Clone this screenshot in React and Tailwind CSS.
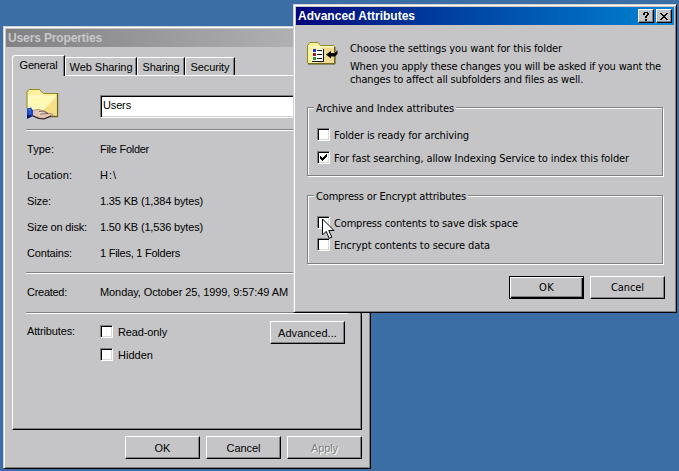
import { useLayoutEffect, useRef, useState } from "react";

const SANS = "font-['Liberation_Sans',Arial,sans-serif] text-[11px] leading-[14px]";
const TAHOMA = "font-['DejaVu_Sans_Condensed','DejaVu_Sans',Tahoma,sans-serif] text-[11px] leading-[13px]";
const TAHOMA_OPTION = "font-['DejaVu_Sans_Condensed','DejaVu_Sans',Tahoma,sans-serif] text-[11px] leading-[13px] pt-px";

// A single line of text whose tracking is adjusted to fill a given width.
function Line({ w, children, className = SANS }) {
  const ref = useRef(null);
  const [spacing, setSpacing] = useState(0);
  useLayoutEffect(() => {
    const natural = ref.current.getBoundingClientRect().width;
    setSpacing((w - natural) / children.length);
  }, [w, children]);
  return (
    <span ref={ref} className={`inline-block shrink-0 whitespace-nowrap ${className}`} style={{ letterSpacing: spacing }}>
      {children}
    </span>
  );
}

const RAISED =
  "border border-t-white border-l-white border-r-black border-b-black shadow-[inset_-1px_-1px_0_#808080]";

function Button({ w, children, font = SANS, primary = false, disabled = false }) {
  return (
    <button
      className={`flex h-[23px] w-[75px] shrink-0 items-center justify-center bg-[#c5c5c7] ${
        primary
          ? "border border-black shadow-[inset_1px_1px_0_#fff,inset_-1px_-1px_0_#000,inset_-2px_-2px_0_#808080]"
          : RAISED
      } ${disabled ? "text-[#808080] [text-shadow:1px_1px_0_#fff]" : ""}`}
    >
      <Line w={w} className={font}>{children}</Line>
    </button>
  );
}

function Checkbox({ checked = false }) {
  return (
    <span className="flex h-[13px] w-[13px] shrink-0 border border-t-[#808080] border-l-[#808080] border-r-white border-b-white bg-white shadow-[inset_1px_1px_0_#000,inset_-1px_-1px_0_#d8d8d8]">
      {checked && (
        <svg width="11" height="11" viewBox="0 0 11 11" shapeRendering="crispEdges">
          <path d="M2 4h1v3h-1zM3 5h1v3h-1zM4 6h1v3h-1zM5 5h1v3h-1zM6 4h1v3h-1zM7 3h1v3h-1zM8 2h1v3h-1z" />
        </svg>
      )}
    </span>
  );
}

function Option({ w, checked, children, font, gap = "gap-[5px]" }) {
  return (
    <label className={`flex h-[13px] items-start ${gap}`}>
      <Checkbox checked={checked} />
      <Line w={w} className={font}>{children}</Line>
    </label>
  );
}

function Divider() {
  return <div className="h-[2px] shrink-0 border-t border-b border-t-[#808080] border-b-white" />;
}

function Tab({ w, width, children }) {
  return (
    <div
      className={`flex h-[18px] ${width} justify-center rounded-tl-[2px] border-t border-l border-r border-t-white border-l-white border-r-black pt-[2px] shadow-[inset_-1px_0_0_#808080]`}
    >
      <Line w={w}>{children}</Line>
    </div>
  );
}

function SharedFolderIcon() {
  return (
    <svg width="33" height="33" viewBox="0 0 33 33" className="shrink-0">
      <path d="M1 30V4l2-2.5h10.500l3 3.500H31v24H1z" fill="#fff0a0" />
      <path d="M2 8h28L16 28H2z" fill="#fff9b8" />
      <path d="M30 9v19H12z" fill="#f7df86" />
      <path d="M1 21V4l2-2.500h10.500l3 3.500" fill="none" stroke="#8c8c20" />
      <path d="M17 5.500h14" fill="none" stroke="#8c8c20" />
      <path d="M2.500 21V8h13l3-2" fill="none" stroke="#fffde0" />
      <path d="M31.500 5v23.500H22" fill="none" stroke="#6a6420" strokeWidth="1.300" />
      <path d="M6 22.500l6-1 7 1.500 2 2 5 1c2 .5 1 2-1 2l-6 2.500-7-.5-6-3z" fill="#e6c3b2" stroke="#8e7068" strokeWidth=".7" />
      <path d="M7 28l6 2.500 5 .5 7-3" fill="none" stroke="#201814" strokeWidth="1.200" />
      <path d="M13 23.500l6 .5 3 1.500-8 .5" fill="#fff2e9" stroke="#4c3830" strokeWidth=".7" />
      <path d="M1 20.500l4-1 2 3v6l-6 2z" fill="#1746bd" />
      <path d="M1 27h3l2 1-5 3z" fill="#06186c" />
      <path d="M2 22l2-.5v5" fill="none" stroke="#4f7de5" />
    </svg>
  );
}

function SettingsFolderIcon() {
  return (
    <svg width="33" height="24" viewBox="0 0 33 24" className="shrink-0">
      <path d="M.5 21V3.500l2.500-3h8l2.500 3H26.500l1 1V21.500H1z" fill="#fbf29c" stroke="#8c8a28" />
      <path d="M14 5h13v16H10z" fill="#f3d891" />
      <path d="M1.500 5h24" stroke="#fffdd8" />
      <path d="M1 22h27V5" fill="none" stroke="#55501c" />
      <path d="M5 7h11v12H5z" fill="#fff" />
      <path d="M5 19.500h11.500V7" fill="none" stroke="#111" />
      <g shapeRendering="crispEdges">
        <path d="M6 7h3v3H6z" fill="#2929d0" />
        <path d="M6 11h3v3H6z" fill="#a31818" />
        <path d="M6 15h3v3H6z" fill="#20a020" />
        <path d="M10 8h5v1h-5zM10 12h5v1h-5zM10 16h5v1h-5z" fill="#111" />
      </g>
      <path d="M19 12.500l5-3.500v2h4l2.500-3v4l-2.500 2.500h-4V16.500z" fill="#080808" />
    </svg>
  );
}

function CaptionButton({ children }) {
  return (
    <button className={`flex h-[14px] w-[16px] items-center justify-center bg-[#c5c5c7] ${RAISED}`}>
      {children}
    </button>
  );
}

function Group({ title, w, children, pad }) {
  return (
    <div role="group" className="h-[70px] w-[357px] shrink-0 pr-px pb-px">
      <div className="flex h-[69px] w-[356px] flex-col border border-[#808080] shadow-[1px_1px_0_#fff,inset_1px_1px_0_#fff]">
        <div className="-mt-[6px] ml-[6px] flex h-[13px] shrink-0 self-start bg-[#c5c5c7] px-[2px]">
          <Line w={w} className={TAHOMA}>{title}</Line>
        </div>
        <div className={`flex flex-col pl-[9px] ${pad}`}>{children}</div>
      </div>
    </div>
  );
}

const WINDOW =
  "flex flex-col border-t border-l border-r border-b border-t-[#d0d0d2] border-l-[#d0d0d2] border-r-black border-b-black bg-[#c5c5c7] p-[2px] shadow-[inset_1px_1px_0_#fff,inset_-1px_-1px_0_#808080]";
const CAPTION = "font-['Liberation_Sans',Arial,sans-serif] text-[12px] leading-[18px] font-bold";

const details = [
  ["Type:", 27, "File Folder", 49],
  ["Location:", 45, "H:\\", 17],
  ["Size:", 24, "1.35 KB (1,384 bytes)", 103],
  ["Size on disk:", 60, "1.50 KB (1,536 bytes)", 103],
  ["Contains:", 45, "1 Files, 1 Folders", 80],
];

function PropertiesWindow() {
  return (
    <section className={`absolute top-[26px] left-[3px] h-[443px] w-[368px] ${WINDOW}`}>
      <header className="flex h-[18px] shrink-0 bg-linear-to-r from-[#818183] to-[#bdbdbf] pl-[2px] text-[#c8c8ca]">
        <Line w={94} className={CAPTION}>Users Properties</Line>
      </header>
      <div className="flex flex-col pt-[8px] pr-[6px] pl-[6px]">
        <nav className="flex h-[20px] items-end">
          <div className="z-10 -mb-px flex h-[21px] w-[53px] justify-center rounded-tl-[3px] border-t border-l border-r border-t-white border-l-white border-r-black bg-[#c5c5c7] pt-[2px] shadow-[inset_-1px_0_0_#808080]">
            <Line w={38}>General</Line>
          </div>
          <Tab w={63} width="w-[72px]">Web Sharing</Tab>
          <Tab w={37} width="w-[48px]">Sharing</Tab>
          <Tab w={39} width="w-[50px]">Security</Tab>
        </nav>
        <div className={`flex h-[355px] w-[350px] flex-col pt-[12px] pr-[13px] pl-[13px] ${RAISED}`}>
          <div className="flex h-[41px] shrink-0">
            <SharedFolderIcon />
            <div className="mt-[7px] ml-[41px] flex h-[23px] flex-1 items-start border border-t-[#808080] border-l-[#808080] border-r-white border-b-white bg-white pt-[2px] pl-[2px] shadow-[inset_1px_1px_0_#000,inset_-1px_-1px_0_#d0d0d0]">
              <Line w={28}>Users</Line>
            </div>
          </div>
          <Divider />
          <dl className="pt-[5px] pb-[6px]">
            {details.map(([name, nw, value, vw]) => (
              <div key={name} className="flex h-[26px] items-center">
                <dt className="flex w-[74px] pl-px"><Line w={nw}>{name}</Line></dt>
                <dd className="flex"><Line w={vw}>{value}</Line></dd>
              </div>
            ))}
          </dl>
          <Divider />
          <div className="flex h-[38px] shrink-0 pt-[11px]">
            <div className="flex w-[74px] pl-px"><Line w={40}>Created:</Line></div>
            <Line w={188}>Monday, October 25, 1999, 9:57:49 AM</Line>
          </div>
          <Divider />
          <div className="flex items-start pt-[7px]">
            <div className="flex w-[74px] pt-[3px] pl-px"><Line w={48}>Attributes:</Line></div>
            <div className="flex flex-col gap-[10px] pt-[4px]">
              <Option w={49} font={SANS}>Read-only</Option>
              <Option w={35} font={SANS}>Hidden</Option>
            </div>
            <div className="mr-[3px] ml-auto"><Button w={59}>Advanced...</Button></div>
          </div>
        </div>
        <footer className="flex justify-end gap-[6px] pt-[6px]">
          <Button w={16}>OK</Button>
          <Button w={34}>Cancel</Button>
          <Button w={27} disabled>Apply</Button>
        </footer>
      </div>
    </section>
  );
}

function AttributesDialog() {
  return (
    <section className={`absolute top-[4px] left-[293px] h-[309px] w-[384px] ${WINDOW}`}>
      <header className="flex h-[18px] shrink-0 items-center bg-linear-to-r from-[#00007b] to-[#1084d4] pr-[2px] pl-[2px] text-white">
        <Line w={117} className={CAPTION}>Advanced Attributes</Line>
        <div className="ml-auto flex gap-[2px] text-black">
          <CaptionButton>
            <svg width="8" height="9" viewBox="0 0 8 9" shapeRendering="crispEdges">
              <path d="M2 0h4v1h-4zM1 1h2v2h-2zM5 1h2v2h-2zM4 3h2v1h-2zM3 4h2v2h-2zM3 7h2v2h-2z" />
            </svg>
          </CaptionButton>
          <CaptionButton>
            <svg width="8" height="7" viewBox="0 0 8 7" shapeRendering="crispEdges">
              <path d="M0 0h2v1h-2zM6 0h2v1h-2zM1 1h2v1h-2zM5 1h2v1h-2zM2 2h4v1h-4zM3 3h2v1h-2zM2 4h4v1h-4zM1 5h2v1h-2zM5 5h2v1h-2zM0 6h2v1h-2zM6 6h2v1h-2z" />
            </svg>
          </CaptionButton>
        </div>
      </header>
      <div className="flex flex-col pl-[11px]">
        <div className="flex h-[82px] shrink-0 gap-[10px] pt-[17px]">
          <SettingsFolderIcon />
          <div className="flex flex-col items-start">
            <Line w={212} className={TAHOMA}>Choose the settings you want for this folder</Line>
            <div className="flex flex-col items-start pt-[5px]">
              <Line w={311} className={TAHOMA}>When you apply these changes you will be asked if you want the</Line>
              <Line w={233} className={TAHOMA}>changes to affect all subfolders and files as well.</Line>
            </div>
          </div>
        </div>
        <Group title="Archive and Index attributes" w={138} pad="gap-[10px] pt-[13px]">
          <Option w={135} font={TAHOMA_OPTION} gap="gap-[4px]">Folder is ready for archiving</Option>
          <Option w={295} font={TAHOMA_OPTION} gap="gap-[4px]" checked>For fast searching, allow Indexing Service to index this folder</Option>
        </Group>
        <div className="pt-[18px]">
          <Group title="Compress or Encrypt attributes" w={150} pad="gap-[9px] pt-[13px]">
            <Option w={184} font={TAHOMA_OPTION} gap="gap-[4px]">Compress contents to save disk space</Option>
            <Option w={156} font={TAHOMA_OPTION} gap="gap-[4px]">Encrypt contents to secure data</Option>
          </Group>
        </div>
        <footer className="flex justify-end gap-[6px] pt-[11px] pr-[9px]">
          <Button w={15} font={TAHOMA} primary>OK</Button>
          <Button w={33} font={TAHOMA}>Cancel</Button>
        </footer>
      </div>
    </section>
  );
}

export default function App() {
  return (
    <main className="relative h-[471px] w-[679px] overflow-hidden bg-[#3a6ea5] text-black">
      <PropertiesWindow />
      <AttributesDialog />
      <svg className="absolute top-[218px] left-[322px]" width="13" height="22" viewBox="0 0 13 22">
        <path d="M.5 1v16l3.700-3.700 3 7 2.600-1.100-3-6.700H12z" fill="#fff" stroke="#000" />
      </svg>
    </main>
  );
}
